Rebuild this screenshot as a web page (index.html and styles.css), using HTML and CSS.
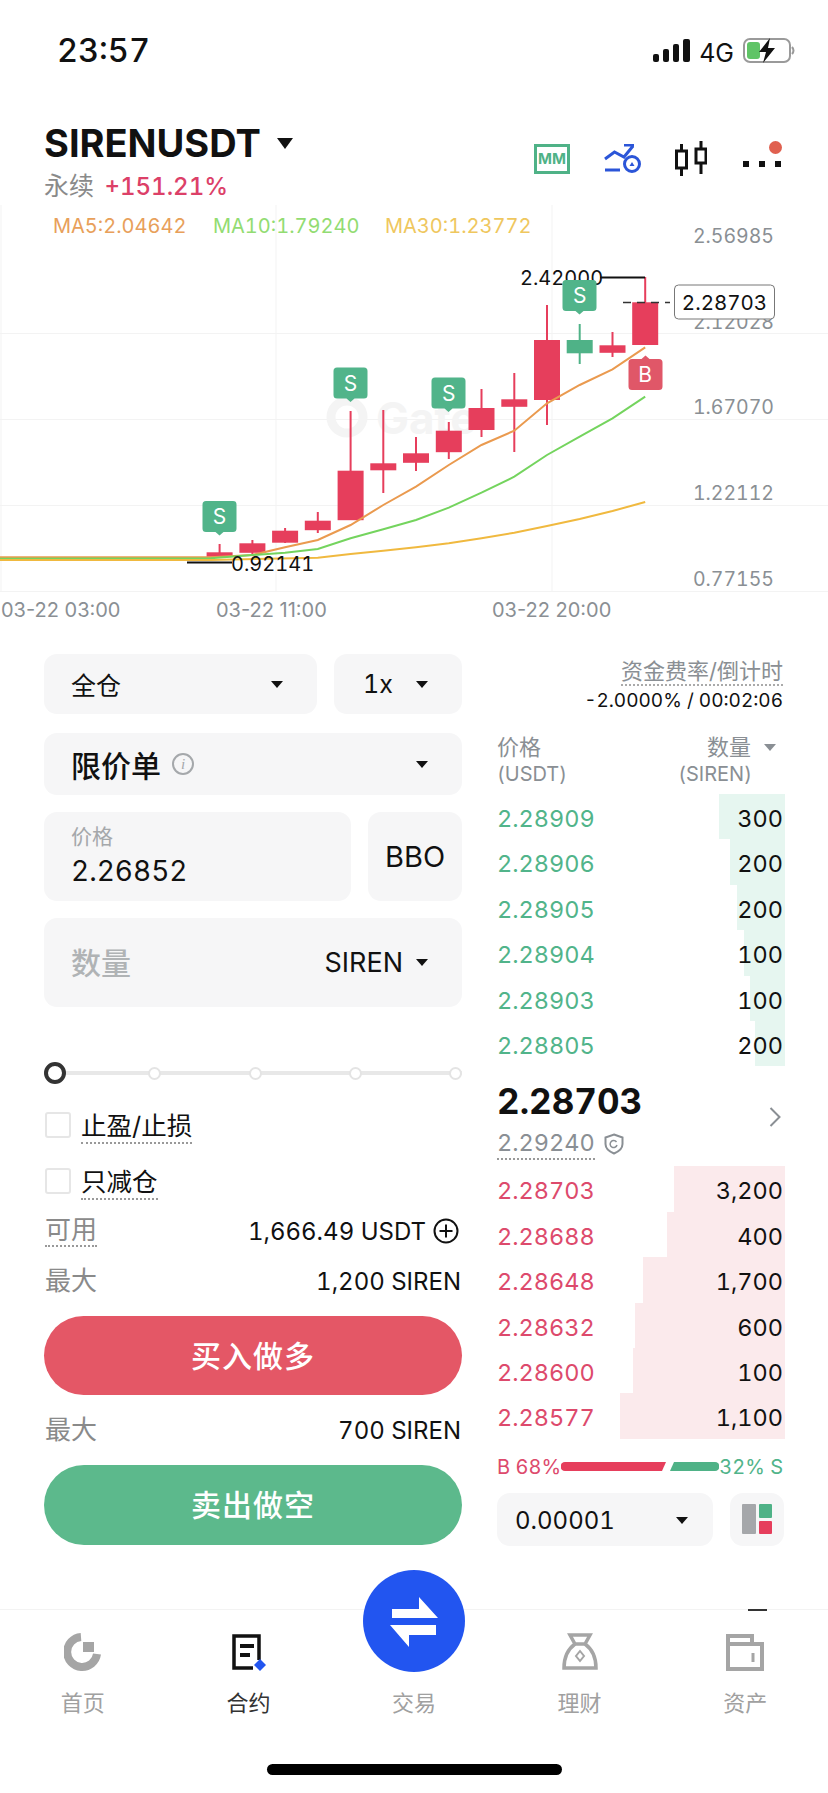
FILE: index.html
```html
<!DOCTYPE html>
<html>

<head>
  <meta charset="UTF-8">
  <link rel="stylesheet" href="styles.css">
</head>

<body>
  <div class="page">
    <div class="status-bar">
      <span class="time">23:57</span>
      <div class="status-icons">
        <svg class="signal" width="37" height="23" viewBox="0 0 37 23">
          <rect x="0" y="15" width="6" height="8" rx="2"></rect>
          <rect x="10" y="10" width="6" height="13" rx="2"></rect>
          <rect x="20" y="5" width="6" height="18" rx="2"></rect>
          <rect x="30" y="0" width="7" height="23" rx="2"></rect>
        </svg>
        <span class="network">4G</span>
        <svg width="52" height="25" viewBox="0 0 52 25">
          <rect x="1" y="1" width="46" height="23" rx="6" fill="none" stroke="#9a9a9a" stroke-width="2"></rect>
          <rect x="4" y="4" width="13" height="17" rx="3" fill="#5fc466"></rect>
          <path d="M49 9 q3 3.500 0 7" fill="none" stroke="#9a9a9a" stroke-width="2"></path>
          <path d="M27 0 L16 14 H23 L20 25 L32 10 H25 Z" fill="#111"></path>
        </svg>
      </div>
    </div>

    <div class="header">
      <div>
        <div class="pair">SIRENUSDT <i class="caret caret-lg"></i></div>
        <div class="pair-sub"><span class="pair-type">永续</span> <span class="pair-change">+151.21%</span></div>
      </div>
      <div class="header-icons">
        <div class="mm-icon">MM</div>
        <svg class="alert-icon" width="37" height="29" viewBox="0 0 37 29" fill="none" stroke="#2b55d8" stroke-width="3">
          <path d="M1 15 L10.500 8 L20 13 L29 2 M20 1 H30"></path>
          <path d="M1 26 H16"></path>
          <circle cx="28" cy="20" r="7.500"></circle>
          <path d="M25.500 22 H30.500 L28 18 Z" fill="#2b55d8" stroke="none"></path>
        </svg>
        <svg class="candle-icon" width="32" height="35" viewBox="0 0 32 35" fill="none" stroke="#111" stroke-width="3">
          <path d="M6.500 3 V10 M6.500 27 V35 M26 0 V8 M26 22 V33"></path>
          <rect x="1.500" y="10" width="10" height="17"></rect>
          <rect x="21" y="8" width="10" height="14"></rect>
        </svg>
        <div class="more-icon">
          <i></i><i></i><i></i>
          <b class="red-dot"></b>
        </div>
      </div>
    </div>

    <div class="chart">
      <svg width="828" height="425" viewBox="0 -5 828 425">
        <g class="grid">
          <path d="M0 123.500 H828 M0 209.500 H828 M0 295.500 H828 M0 381.500 H828"></path>
          <path d="M1 -5 V381 M276 -5 V381 M552 -5 V381"></path>
        </g>
        <circle class="watermark-ring" cx="347" cy="207" r="16"></circle>
        <text class="watermark" x="376" y="224">Gate</text>

        <g class="wicks-red">
          <path d="M219.600 334 V347 M252.400 330 V345 M285.100 318 V333 M317.800 302 V323 M350.600 201 V310 M383.300 200 V283 M416 227 V261 M448.800 212 V249 M481.500 179 V227 M514.300 163 V242 M547 95 V215 M612.500 122 V147 M645.200 67 V135"></path>
        </g>
        <path class="wick-green" d="M579.700 114 V154"></path>
        <g class="bodies-red">
          <rect x="206.600" y="342.300" width="26" height="4.500"></rect>
          <rect x="239.400" y="333.300" width="26" height="9.500"></rect>
          <rect x="272.100" y="320.700" width="26" height="12"></rect>
          <rect x="304.800" y="310.700" width="26" height="9.500"></rect>
          <rect x="337.600" y="260.700" width="26" height="49.500"></rect>
          <rect x="370.300" y="253.300" width="26" height="7"></rect>
          <rect x="403" y="243.300" width="26" height="9.500"></rect>
          <rect x="435.800" y="220.700" width="26" height="21.500"></rect>
          <rect x="468.500" y="198" width="26" height="22"></rect>
          <rect x="501.300" y="189.300" width="26" height="7.500"></rect>
          <rect x="534" y="130" width="26" height="60"></rect>
          <rect x="599.500" y="135.300" width="26" height="7.500"></rect>
          <rect x="632.200" y="92.300" width="26" height="42.700"></rect>
        </g>
        <rect class="body-green" x="566.700" y="130" width="26" height="13.300"></rect>

        <polyline class="ma ma5" points="0,347.300 211,347.300 252.400,345 285,337.300 317.800,330 350.600,315 383.300,295 416,276.700 448.800,255 481.500,235 514.300,220.700 547,193.300 579.700,175 612.500,159.300 645.200,137.300"></polyline>
        <polyline class="ma ma10" points="0,348.700 211,348.300 252.400,345 285,342.700 317.800,339 350.600,328.300 383.300,319.300 416,310 448.800,297.700 481.500,282.700 514.300,266.700 547,245 579.700,226.700 612.500,208.300 645.200,186.700"></polyline>
        <polyline class="ma ma30" points="0,350 211,350 317.800,347.700 350.600,344 383.300,340.700 416,337.300 448.800,333.300 481.500,328.300 514.300,322.700 547,316 579.700,309 612.500,301 645.200,292"></polyline>

        <text class="ma-label ma5-text" x="53" y="23">MA5:2.04642</text>
        <text class="ma-label ma10-text" x="213" y="23">MA10:1.79240</text>
        <text class="ma-label ma30-text" x="385" y="23">MA30:1.23772</text>

        <g class="axis">
          <text x="774" y="33">2.56985</text>
          <text x="774" y="119">2.12028</text>
          <text x="774" y="204">1.67070</text>
          <text x="774" y="290">1.22112</text>
          <text x="774" y="376">0.77155</text>
        </g>
        <g class="axis-x">
          <text x="1" y="407">03-22 03:00</text>
          <text x="216" y="407">03-22 11:00</text>
          <text x="492" y="407">03-22 20:00</text>
        </g>

        <path class="extreme" d="M600 67.500 H645 M187 352.500 H232"></path>
        <text class="extreme-text" x="520" y="75">2.42000</text>
        <text class="extreme-text" x="231" y="361">0.92141</text>

        <path class="sell-mark" d="M206 291 h27 a3.500 3.500 0 0 1 3.500 3.500 v24 a3.500 3.500 0 0 1 -3.500 3.500 h-9.500 l-4 3.500 l-4 -3.500 h-9.500 a3.500 3.500 0 0 1 -3.500 -3.500 v-24 a3.500 3.500 0 0 1 3.500 -3.500 z"></path>
        <path class="sell-mark" d="M337 157.500 h27 a3.500 3.500 0 0 1 3.500 3.500 v24 a3.500 3.500 0 0 1 -3.500 3.500 h-9.500 l-4 3.500 l-4 -3.500 h-9.500 a3.500 3.500 0 0 1 -3.500 -3.500 v-24 a3.500 3.500 0 0 1 3.500 -3.500 z"></path>
        <path class="sell-mark" d="M435 167.500 h27 a3.500 3.500 0 0 1 3.500 3.500 v24 a3.500 3.500 0 0 1 -3.500 3.500 h-9.500 l-4 3.500 l-4 -3.500 h-9.500 a3.500 3.500 0 0 1 -3.500 -3.500 v-24 a3.500 3.500 0 0 1 3.500 -3.500 z"></path>
        <path class="sell-mark" d="M566 70 h27 a3.500 3.500 0 0 1 3.500 3.500 v24 a3.500 3.500 0 0 1 -3.500 3.500 h-9.500 l-4 3.500 l-4 -3.500 h-9.500 a3.500 3.500 0 0 1 -3.500 -3.500 v-24 a3.500 3.500 0 0 1 3.500 -3.500 z"></path>
        <path class="buy-mark" d="M632 149 h9.500 l4 -3.500 l4 3.500 h9.500 a3.500 3.500 0 0 1 3.500 3.500 v24 a3.500 3.500 0 0 1 -3.500 3.500 h-27 a3.500 3.500 0 0 1 -3.500 -3.500 v-24 a3.500 3.500 0 0 1 3.500 -3.500 z"></path>
        <g class="mark-text">
          <text x="219.600" y="314">S</text>
          <text x="350.600" y="180.500">S</text>
          <text x="448.800" y="190.500">S</text>
          <text x="579.700" y="93">S</text>
          <text x="645.200" y="172">B</text>
        </g>

        <path class="last-line" d="M623 92.500 H670"></path>
        <rect class="last-tag" x="674.500" y="75" width="100" height="34" rx="4"></rect>
        <text class="last-text" x="724.500" y="100">2.28703</text>
      </svg>
    </div>

    <div class="trade">
      <div class="order-form">
        <div class="form-row">
          <div class="field field-margin"><span class="field-text">全仓</span><i class="caret"></i></div>
          <div class="field field-lever"><span class="field-text">1x</span><i class="caret"></i></div>
        </div>
        <div class="field field-type">
          <span class="type-text">限价单 <i class="info-icon">i</i></span>
          <i class="caret"></i>
        </div>
        <div class="form-row">
          <div class="field field-price">
            <div class="price-label">价格</div>
            <div class="price-value">2.26852</div>
          </div>
          <div class="field field-bbo">BBO</div>
        </div>
        <div class="field field-qty">
          <span class="qty-label">数量</span>
          <span class="qty-unit">SIREN <i class="caret"></i></span>
        </div>

        <div class="slider">
          <i class="node node-active"></i><i class="node"></i><i class="node"></i><i class="node"></i><i class="node"></i>
        </div>

        <div class="check-row check-first"><i class="checkbox"></i><span class="dotted">止盈/止损</span></div>
        <div class="check-row check-second"><i class="checkbox"></i><span class="dotted">只减仓</span></div>

        <div class="info-row info-first">
          <span class="info-key dotted-key">可用</span>
          <span class="info-val">1,666.49 USDT
            <svg class="plus-icon" width="26" height="26" viewBox="0 0 26 26" fill="none" stroke="#111" stroke-width="2">
              <circle cx="13" cy="13" r="11.500"></circle>
              <path d="M13 6.500 V19.500 M6.500 13 H19.500"></path>
            </svg>
          </span>
        </div>
        <div class="info-row"><span class="info-key">最大</span><span class="info-val">1,200 SIREN</span></div>
        <button class="action action-buy">买入做多</button>
        <div class="info-row"><span class="info-key">最大</span><span class="info-val">700 SIREN</span></div>
        <button class="action action-sell">卖出做空</button>
      </div>

      <div class="book">
        <div class="funding">
          <div><span class="funding-label">资金费率/倒计时</span></div>
          <div class="funding-value">-2.0000% / 00:02:06</div>
        </div>
        <div class="book-head">
          <div>价格<br><small>(USDT)</small></div>
          <div class="book-head-right">数量<i class="caret caret-grey"></i><br><small class="head-unit">(SIREN)</small></div>
        </div>

        <div class="rows rows-green">
          <div class="row"><i class="depth" style="width:66px"></i><span class="price">2.28909</span><span class="qty">300</span></div>
          <div class="row"><i class="depth" style="width:55px"></i><span class="price">2.28906</span><span class="qty">200</span></div>
          <div class="row"><i class="depth" style="width:48px"></i><span class="price">2.28905</span><span class="qty">200</span></div>
          <div class="row"><i class="depth" style="width:41px"></i><span class="price">2.28904</span><span class="qty">100</span></div>
          <div class="row"><i class="depth" style="width:35px"></i><span class="price">2.28903</span><span class="qty">100</span></div>
          <div class="row"><i class="depth" style="width:30px"></i><span class="price">2.28805</span><span class="qty">200</span></div>
        </div>

        <div class="mid">
          <div>
            <div class="mid-price">2.28703</div>
            <div class="mark-price">
              <span class="mark-value">2.29240</span>
              <svg width="20" height="22" viewBox="0 0 20 22" fill="none" stroke="#8a8f94" stroke-width="2">
                <path d="M10 1.500 L18.500 4.500 V11 Q18.500 17 10 20.500 Q1.500 17 1.500 11 V4.500 Z"></path>
                <path d="M12.500 9 A3.500 3.500 0 1 0 13 12" stroke-width="1.500"></path>
              </svg>
            </div>
          </div>
          <svg class="chevron" width="12" height="20" viewBox="0 0 12 20" fill="none" stroke="#8a8f94" stroke-width="2">
            <path d="M1.500 1 L10.500 10 L1.500 19"></path>
          </svg>
        </div>

        <div class="rows rows-red">
          <div class="row"><i class="depth" style="width:111px"></i><span class="price">2.28703</span><span class="qty">3,200</span></div>
          <div class="row"><i class="depth" style="width:118px"></i><span class="price">2.28688</span><span class="qty">400</span></div>
          <div class="row"><i class="depth" style="width:142px"></i><span class="price">2.28648</span><span class="qty">1,700</span></div>
          <div class="row"><i class="depth" style="width:150px"></i><span class="price">2.28632</span><span class="qty">600</span></div>
          <div class="row"><i class="depth" style="width:152px"></i><span class="price">2.28600</span><span class="qty">100</span></div>
          <div class="row"><i class="depth" style="width:165px"></i><span class="price">2.28577</span><span class="qty">1,100</span></div>
        </div>

        <div class="ratio">
          <span class="ratio-buy">B 68%</span>
          <svg width="158" height="9" viewBox="0 0 158 9">
            <path d="M4 0 H105 L101 9 H4 A4 4 0 0 1 4 0 Z" fill="#e63e5c"></path>
            <path d="M113 0 H154 A4 4 0 0 1 154 9 H109 Z" fill="#4fb287"></path>
          </svg>
          <span class="ratio-sell">32% S</span>
        </div>

        <div class="book-tools">
          <div class="field field-step"><span class="step-text">0.00001</span><i class="caret"></i></div>
          <div class="field field-layout">
            <svg width="30" height="30" viewBox="0 0 30 30">
              <rect x="0" y="0" width="14" height="30" rx="1" fill="#a5a7aa"></rect>
              <rect x="17" y="0" width="13" height="14" rx="1" fill="#4fb287"></rect>
              <rect x="17" y="17" width="13" height="13" rx="1" fill="#e63e5c"></rect>
            </svg>
          </div>
        </div>
      </div>
    </div>

    <div class="tabbar">
      <i class="tab-dash"></i>
      <div class="swap-button">
        <svg width="52" height="54" viewBox="-26 -27 52 54" fill="#fff">
          <polygon points="-22,-3 -22,-12 5,-12 5,-24 24,-3"></polygon>
          <polygon points="22,4 22,14 -5,14 -5,26 -24,4"></polygon>
        </svg>
      </div>
      <div class="tabs">
        <div class="tab">
          <svg width="38" height="38" viewBox="0 0 38 38" fill="none" stroke="#a5a5a5">
            <path d="M17 4 A15 15 0 1 0 33 21" stroke-width="8"></path>
            <rect x="19" y="9" width="11" height="10" fill="#a5a5a5" stroke="none"></rect>
          </svg>
          <span>首页</span>
        </div>
        <div class="tab tab-active">
          <svg width="38" height="38" viewBox="0 0 38 38">
            <path d="M30 27 V3 H5 V35 H24" fill="none" stroke="#111" stroke-width="3.500"></path>
            <rect x="11" y="11" width="14" height="4" fill="#111"></rect>
            <rect x="11" y="20" width="10" height="4" fill="#111"></rect>
            <path d="M31 26 L37 32 L31 38 L25 32 Z" fill="#2255f0"></path>
          </svg>
          <span>合约</span>
        </div>
        <div class="tab">
          <div class="tab-spacer"></div>
          <span>交易</span>
        </div>
        <div class="tab">
          <svg width="38" height="38" viewBox="0 0 38 38" fill="none" stroke="#a5a5a5" stroke-width="3.500">
            <path d="M9 2 H29 L24 11 H14 Z"></path>
            <path d="M14 11 Q3 19 3 35 H35 Q35 19 24 11"></path>
            <path d="M19 18 L23 23 L19 28 L15 23 Z" stroke-width="2"></path>
          </svg>
          <span>理财</span>
        </div>
        <div class="tab">
          <svg width="40" height="38" viewBox="0 0 40 38" fill="none" stroke="#a5a5a5" stroke-width="4">
            <path d="M3 36 V3 H27 V11 H37 V36 Z"></path>
            <path d="M3 11 H27"></path>
            <path d="M28 20 V29" stroke-width="3"></path>
          </svg>
          <span>资产</span>
        </div>
      </div>
      <div class="home-indicator"></div>
    </div>
  </div>
</body>

</html>
```

FILE: styles.css
```css
* {
  margin: 0;
  padding: 0;
  box-sizing: border-box;
}

body {
  background: #fff;
  color: #111;
  font-family: Inter, "Noto Sans CJK SC", sans-serif;
  font-variant-numeric: tabular-nums;
}

i {
  font-style: normal;
}

.page {
  display: flex;
  flex-direction: column;
  width: 828px;
  height: 1793px;
  overflow: hidden;
}

/* status bar */
.status-bar {
  display: flex;
  justify-content: space-between;
  height: 100px;
  padding: 38px 33px 0 57px;
}

.time {
  font-size: 32.500px;
  font-weight: 500;
  line-height: 26px;
}

.status-icons {
  display: flex;
  align-items: flex-start;
  gap: 9px;
}

.signal {
  fill: #111;
  margin: 1px 0 0 -3px;
}

.network {
  font-size: 25px;
  line-height: 26px;
  margin-top: 2px;
}

/* header */
.header {
  display: flex;
  justify-content: space-between;
  height: 105px;
  padding: 24px 47px 0 44px;
}

.pair {
  display: flex;
  align-items: center;
  gap: 16px;
  font-size: 38px;
  font-weight: 700;
  line-height: 38px;
}

.pair-sub {
  margin-top: 9px;
  font-size: 24px;
  line-height: 30px;
}

.pair-type {
  font-size: 25px;
  color: #8a8a8a;
}

.pair-change {
  color: #dc4068;
  font-weight: 500;
  margin-left: 4px;
}

.header-icons {
  display: flex;
  align-items: center;
  gap: 34px;
  height: 37px;
  margin-top: 16px;
}

.candle-icon {
  margin-right: 2px;
}

.mm-icon {
  width: 36px;
  height: 30px;
  border: 3px solid #4fb287;
  color: #4fb287;
  font-size: 15px;
  font-weight: 700;
  line-height: 24px;
  text-align: center;
}

.more-icon {
  position: relative;
  display: flex;
  gap: 10px;
  width: 38px;
}

.more-icon i {
  width: 6px;
  height: 6px;
  background: #111;
  margin-top: 10px;
}

.red-dot {
  position: absolute;
  top: -10px;
  right: -1px;
  width: 13px;
  height: 13px;
  border-radius: 50%;
  background: #e0604f;
}

.caret {
  display: inline-block;
  width: 0;
  height: 0;
  border-left: 6px solid transparent;
  border-right: 6px solid transparent;
  border-top: 7px solid #111;
}

.caret-lg {
  border-left-width: 8px;
  border-right-width: 8px;
  border-top-width: 11px;
}

.caret-grey {
  border-top-color: #8a8f94;
  margin-left: 13px;
  vertical-align: 4px;
}

/* chart */
.chart {
  height: 425px;
}

.chart svg {
  display: block;
}

.grid path {
  stroke: #f3f3f3;
  stroke-width: 1;
  fill: none;
}

.watermark {
  font-size: 44px;
  font-weight: 700;
  fill: #f4f4f4;
}

.watermark-ring {
  fill: none;
  stroke: #f4f4f4;
  stroke-width: 9;
}

.wicks-red path {
  stroke: #e63e5c;
  stroke-width: 2;
  fill: none;
}

.wick-green {
  stroke: #4fb287;
  stroke-width: 2;
  fill: none;
}

.bodies-red rect {
  fill: #e63e5c;
}

.body-green {
  fill: #4fb287;
}

.ma {
  fill: none;
  stroke-width: 2;
}

.ma5 {
  stroke: #ea9a4f;
}

.ma10 {
  stroke: #74d45e;
}

.ma30 {
  stroke: #f0b93f;
}

.ma-label {
  font-size: 20px;
}

.ma5-text {
  fill: #e8a05a;
}

.ma10-text {
  fill: #92dc72;
}

.ma30-text {
  fill: #efc75e;
}

.axis text {
  font-size: 19.500px;
  fill: #8a8f94;
  text-anchor: end;
}

.axis-x text {
  font-size: 20px;
  fill: #8a8f94;
  font-variant-numeric: normal;
}

.extreme {
  stroke: #111;
  stroke-width: 2;
  fill: none;
}

.extreme-text {
  font-size: 20px;
  fill: #111;
}

.sell-mark {
  fill: #51b48a;
}

.buy-mark {
  fill: #e05768;
}

.mark-text text {
  fill: #fff;
  font-size: 21px;
  text-anchor: middle;
}

.last-line {
  stroke: #333;
  stroke-width: 1.500;
  stroke-dasharray: 8 6;
  fill: none;
}

.last-tag {
  fill: #fff;
  stroke: #777;
  stroke-width: 1;
}

.last-text {
  font-size: 20.500px;
  fill: #111;
  text-anchor: middle;
}

/* trade panel */
.trade {
  display: flex;
  gap: 35px;
  height: 979px;
  padding: 24px 0 0 44px;
}

.order-form {
  width: 418px;
}

.form-row {
  display: flex;
  gap: 17px;
}

.field {
  display: flex;
  align-items: center;
  background: #f6f6f7;
  border-radius: 13px;
}

.field-text {
  font-size: 25px;
}

.field-margin {
  justify-content: space-between;
  width: 273px;
  height: 60px;
  padding: 0 34px 0 27px;
}

.field-lever {
  justify-content: space-between;
  width: 128px;
  height: 60px;
  padding: 0 34px 0 29px;
}

.field-type {
  justify-content: space-between;
  height: 62px;
  margin-top: 19px;
  padding: 0 34px 0 27px;
}

.type-text {
  display: flex;
  align-items: center;
  gap: 11px;
  font-size: 30px;
  font-weight: 500;
}

.info-icon {
  display: block;
  width: 22px;
  height: 22px;
  border: 2px solid #a5a8ab;
  border-radius: 50%;
  color: #a5a8ab;
  font-family: "Liberation Serif", serif;
  font-size: 15px;
  font-style: italic;
  font-weight: 400;
  line-height: 18px;
  text-align: center;
}

.field-price {
  display: block;
  width: 307px;
  height: 89px;
  margin-top: 17px;
  padding: 11px 0 0 27px;
}

.price-label {
  color: #a5a8ab;
  font-size: 21px;
  line-height: 28px;
}

.price-value {
  font-size: 28px;
  line-height: 41px;
}

.field-bbo {
  justify-content: center;
  width: 94px;
  height: 89px;
  margin-top: 17px;
  font-size: 29px;
}

.field-qty {
  justify-content: space-between;
  height: 89px;
  margin-top: 17px;
  padding: 0 34px 4px 27px;
}

.qty-label {
  color: #b0b3b5;
  font-size: 30px;
  font-weight: 500;
}

.qty-unit {
  display: flex;
  align-items: center;
  gap: 13px;
  margin-top: 4px;
  font-size: 27px;
}

.slider {
  display: flex;
  align-items: center;
  justify-content: space-between;
  height: 22px;
  margin-top: 55px;
  background: linear-gradient(#e8e8e8, #e8e8e8) center / 100% 4px no-repeat;
}

.node {
  display: block;
  width: 13px;
  height: 13px;
  border: 2px solid #e4e4e4;
  border-radius: 50%;
  background: #fff;
}

.node-active {
  width: 22px;
  height: 22px;
  border: 4px solid #333;
  margin-right: -5px;
}

.check-row {
  display: flex;
  align-items: center;
  gap: 10px;
  height: 27px;
  font-size: 25.500px;
}

.check-first {
  margin-top: 27px;
}

.check-second {
  margin-top: 29px;
}

.checkbox {
  width: 26px;
  height: 26px;
  margin-left: 1px;
  border: 2px solid #e6e6e6;
  border-radius: 3px;
}

.dotted {
  display: block;
  border-bottom: 2px dotted #999;
  line-height: 32px;
  margin-top: 4px;
}

.info-row {
  display: flex;
  align-items: center;
  justify-content: space-between;
  height: 30px;
  margin-top: 20px;
  padding-left: 1px;
  font-size: 26px;
}

.info-first {
  margin-top: 22px;
}

.info-key {
  margin-top: -5px;
  color: #8a8a8a;
}

.dotted-key {
  display: block;
  margin-top: 0;
  border-bottom: 2px dotted #999;
  line-height: 30px;
}

.info-val {
  display: flex;
  align-items: center;
  gap: 7px;
  padding-right: 1px;
  font-size: 24px;
}

.plus-icon {
  margin-right: 2px;
}

.action {
  display: block;
  width: 100%;
  margin-top: 20px;
  padding-bottom: 4px;
  border: none;
  border-radius: 40px;
  color: #fff;
  font-family: inherit;
  font-size: 30px;
  font-weight: 500;
  letter-spacing: 1px;
}

.action-buy {
  height: 79px;
  background: #e45766;
}

.action-sell {
  height: 80px;
  background: #5cb98c;
}

/* order book */
.book {
  width: 288px;
  padding-top: 5px;
}

.funding {
  text-align: right;
  padding-right: 2px;
}

.funding-label {
  color: #8a8f94;
  font-size: 22px;
  line-height: 24px;
  border-bottom: 2px dotted #aaa;
}

.funding-value {
  margin-top: 5px;
  font-size: 19px;
  line-height: 26px;
}

.book-head {
  display: flex;
  justify-content: space-between;
  margin-top: 20px;
  color: #8a8f94;
  font-size: 22px;
  line-height: 26px;
}

.book-head small {
  font-size: 20px;
}

.book-head-right {
  padding-right: 9px;
  text-align: right;
}

.head-unit {
  margin-right: 24px;
}

.rows {
  margin-top: 7px;
}

.row {
  position: relative;
  display: flex;
  justify-content: space-between;
  height: 45.400px;
  padding-right: 2px;
  font-size: 23.500px;
  line-height: 49px;
}

.depth {
  position: absolute;
  top: 0;
  right: 0;
  bottom: 0;
}

.rows-green .depth {
  background: #e6f6f0;
}

.rows-green .price {
  color: #51b48a;
}

.rows-red {
  margin-top: 0;
}

.rows-red .depth {
  background: #fbeaec;
}

.rows-red .price {
  color: #dd4a6c;
}

.price,
.qty {
  position: relative;
}

.mid {
  display: flex;
  align-items: center;
  justify-content: space-between;
  height: 100px;
  padding: 6px 4px 0 0;
}

.mid-price {
  font-size: 35px;
  font-weight: 700;
  line-height: 44px;
}

.mark-price {
  display: flex;
  align-items: center;
  gap: 9px;
  margin-top: 5px;
  color: #8a8f94;
  font-size: 23.500px;
}

.mark-value {
  border-bottom: 2px dotted #999;
  line-height: 30px;
}

.chevron {
  margin-top: -4px;
}

.ratio {
  display: flex;
  align-items: center;
  justify-content: space-between;
  height: 26px;
  margin-top: 15px;
  padding-right: 2px;
  font-size: 20px;
}

.ratio-buy {
  color: #dd4a6c;
}

.ratio-sell {
  color: #51b48a;
}

.book-tools {
  display: flex;
  justify-content: space-between;
  margin-top: 13px;
  padding-right: 1px;
}

.field-step {
  justify-content: space-between;
  width: 216px;
  height: 53px;
  padding: 2px 25px 0 18px;
}

.step-text {
  font-size: 24px;
}

.field-layout {
  justify-content: center;
  width: 54px;
  height: 53px;
}

/* bottom tabs */
.tabbar {
  position: relative;
  flex: 1;
  border-top: 1px solid #f3f3f3;
}

.tab-dash {
  position: absolute;
  top: -1px;
  left: 748px;
  width: 19px;
  height: 2px;
  background: #333;
}

.swap-button {
  position: absolute;
  top: -40px;
  left: 363px;
  display: flex;
  align-items: center;
  justify-content: center;
  width: 102px;
  height: 102px;
  border-radius: 50%;
  background: #2255f0;
}

.tabs {
  display: grid;
  grid-template-columns: repeat(5, 1fr);
  padding-top: 23px;
}

.tab {
  display: flex;
  flex-direction: column;
  align-items: center;
  gap: 19px;
  color: #a0a0a0;
  font-size: 22px;
  line-height: 27px;
}

.tab-spacer {
  height: 38px;
}

.tab-active {
  color: #333;
}

.home-indicator {
  width: 295px;
  height: 11px;
  margin: 47px auto 0;
  border-radius: 6px;
  background: #000;
}
```
